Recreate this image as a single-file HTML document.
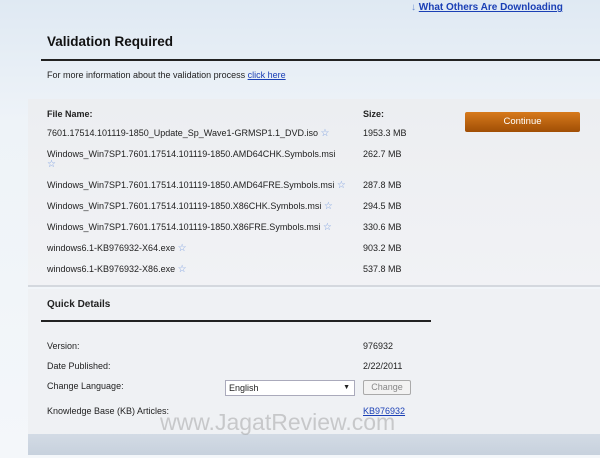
<!DOCTYPE html>
<html><head><style>
*{margin:0;padding:0;box-sizing:border-box}
body{width:600px;height:458px;overflow:hidden;position:relative;font-family:"Liberation Sans",sans-serif;font-size:9px;color:#222;background:linear-gradient(#dfe9f3,#eef3f8 120px,#f4f7fa)}
.a{position:absolute;white-space:nowrap}
.s{color:#7a9ee0;font-size:10px}
a{color:#1a3fb5;text-decoration:underline}
</style></head><body>
<div class="a" style="left:411px;top:2px;font-weight:bold;font-size:10px"><span style="color:#6a8ad0">↓</span> <a>What Others Are Downloading</a></div>
<div class="a" style="left:47px;top:34px;font-weight:bold;font-size:13.5px;color:#111">Validation Required</div>
<div class="a" style="left:41px;top:59px;width:559px;height:2px;background:#222"></div>
<div class="a" style="left:47px;top:70px">For more information about the validation process <a>click here</a></div>
<div class="a" style="left:28px;top:99px;width:572px;height:188px;background:linear-gradient(#eceef1,#f1f2f5);border-bottom:2px solid #d4d8de"></div>
<div class="a" style="left:47px;top:109px;font-weight:bold">File Name:</div>
<div class="a" style="left:363px;top:109px;font-weight:bold">Size:</div>
<div class="a" style="left:465px;top:112px;width:115px;height:20px;background:linear-gradient(#d77a1c,#a04e05);border-radius:2px;color:#fff;text-align:center;line-height:20px;font-size:9.5px">Continue</div>
<div class="a" style="left:47px;top:128px">7601.17514.101119-1850_Update_Sp_Wave1-GRMSP1.1_DVD.iso <span class="s">☆</span></div><div class="a" style="left:363px;top:128px">1953.3 MB</div>
<div class="a" style="left:47px;top:149px">Windows_Win7SP1.7601.17514.101119-1850.AMD64CHK.Symbols.msi<br><span class="s">☆</span></div><div class="a" style="left:363px;top:149px">262.7 MB</div>
<div class="a" style="left:47px;top:180px">Windows_Win7SP1.7601.17514.101119-1850.AMD64FRE.Symbols.msi <span class="s">☆</span></div><div class="a" style="left:363px;top:180px">287.8 MB</div>
<div class="a" style="left:47px;top:201px">Windows_Win7SP1.7601.17514.101119-1850.X86CHK.Symbols.msi <span class="s">☆</span></div><div class="a" style="left:363px;top:201px">294.5 MB</div>
<div class="a" style="left:47px;top:222px">Windows_Win7SP1.7601.17514.101119-1850.X86FRE.Symbols.msi <span class="s">☆</span></div><div class="a" style="left:363px;top:222px">330.6 MB</div>
<div class="a" style="left:47px;top:243px">windows6.1-KB976932-X64.exe <span class="s">☆</span></div><div class="a" style="left:363px;top:243px">903.2 MB</div>
<div class="a" style="left:47px;top:264px">windows6.1-KB976932-X86.exe <span class="s">☆</span></div><div class="a" style="left:363px;top:264px">537.8 MB</div>
<div class="a" style="left:28px;top:289px;width:572px;height:166px;background:#eff1f4"></div>
<div class="a" style="left:28px;top:434px;width:572px;height:21px;background:linear-gradient(#d3dbe5,#c7d1dd)"></div>
<div class="a" style="left:47px;top:299px;font-weight:bold;font-size:10px">Quick Details</div>
<div class="a" style="left:41px;top:320px;width:390px;height:2px;background:#222"></div>
<div class="a" style="left:47px;top:341px">Version:</div><div class="a" style="left:363px;top:341px">976932</div>
<div class="a" style="left:47px;top:361px">Date Published:</div><div class="a" style="left:363px;top:361px">2/22/2011</div>
<div class="a" style="left:47px;top:381px">Change Language:</div>
<div class="a" style="left:225px;top:380px;width:130px;height:16px;background:#fff;border:1px solid #aab;padding-left:3px;line-height:14px">English<span style="position:absolute;right:4px;font-size:7px">▼</span></div>
<div class="a" style="left:363px;top:380px;width:48px;height:15px;border:1px solid #aaa;border-radius:2px;background:#f2f2f2;color:#888;text-align:center;line-height:13px">Change</div>
<div class="a" style="left:47px;top:406px">Knowledge Base (KB) Articles:</div><div class="a" style="left:363px;top:406px"><a>KB976932</a></div>
<div class="a" style="left:160px;top:409px;font-size:23px;color:rgba(140,140,140,.4)">www.JagatReview.com</div>
</body></html>
